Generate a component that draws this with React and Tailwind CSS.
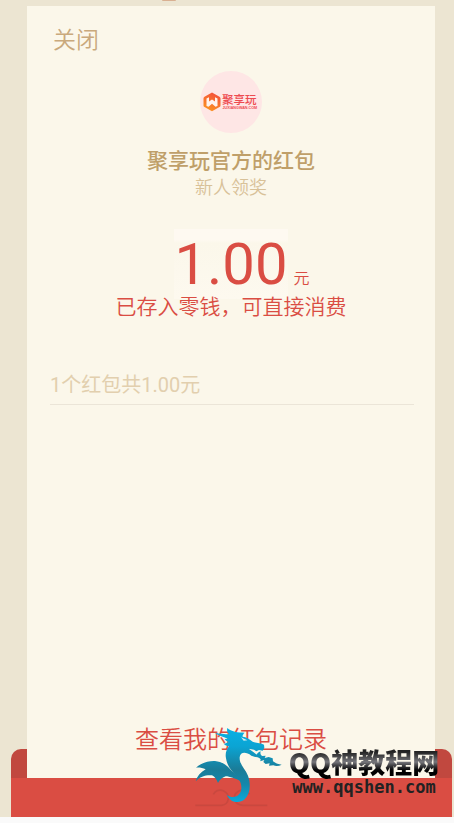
import React from 'react';

const BrandLogo = () => (
    <svg viewBox="0 0 56 20" className="w-14 h-5" aria-hidden="true">
        <defs>
            <linearGradient id="hex" x1="0.7" y1="0" x2="0.3" y2="1">
                <stop offset="0" stopColor="#f4503c" />
                <stop offset="1" stopColor="#fb9420" />
            </linearGradient>
        </defs>
        <path d="M9 0.600 L16.5 4.800 Q17.500 5.400 17.500 6.500 V13.500 Q17.500 14.500 16.500 15 L9 19.300 L1.500 15 Q0.500 14.500 0.500 13.500 V6.500 Q0.500 5.400 1.500 4.800 Z" fill="url(#hex)" />
        <path d="M3.500 6.500 L6 5.300 V9.500 L9 7.600 L12 9.500 V5.300 L14.500 6.500 V14 L12.500 14.800 L9 11.800 L5.500 14.800 L3.500 14 Z" fill="#fff3ee" />
        <text x="19" y="12" fontSize="11.500" fontWeight="500" fill="#ee4a50" fontFamily="'Noto Sans CJK SC', sans-serif">聚享玩</text>
        <text x="19.500" y="17" fontSize="3.700" fontWeight="700" fill="#ee4a50" fontFamily="'Liberation Sans', sans-serif">JUXIANGWAN.COM</text>
    </svg>
);

const Dragon = () => (
    <svg viewBox="0 0 330 324" className="w-[110px] h-[108px]" aria-hidden="true">
        <defs>
            <linearGradient id="scales" x1="0" y1="38" x2="0" y2="265" gradientUnits="userSpaceOnUse">
                <stop offset="0" stopColor="#08b1e6" />
                <stop offset="0.250" stopColor="#0ba4d3" />
                <stop offset="0.550" stopColor="#1a7c98" />
                <stop offset="0.750" stopColor="#1487ab" />
                <stop offset="1" stopColor="#08ade0" />
            </linearGradient>
        </defs>
        <g fill="none" stroke="#c9483f" strokeWidth="5">
            <path d="M46 271 H125 C148 268 153 238 130 227 C117 222 105 228 100 238" />
            <path d="M262 271 H188 C160 268 155 238 178 227 C191 222 203 228 208 238" />
        </g>
        <g fill="url(#scales)">
            <path d="M142 39 C153 50 174 53 194 53 C190 57 187 60 188 65 C199 66 209 72 218 80 C229 85 243 83 252 89 L253 99 L248 107 L237 105 L229 109 L222 104 L206 101 L221 112 L232 121 L229 127 L214 122 C198 110 181 110 179 127 C178 149 195 160 204 182 C213 208 211 237 194 253 C178 267 152 264 140 239 C151 247 164 249 175 240 C188 228 187 207 174 190 C162 174 142 158 138 130 C135 116 139 104 147 94 C140 93 136 91 132 87 L146 81 C140 79 136 76 134 72 L144 71 C128 65 114 61 104 53 C118 56 134 57 148 58 C141 53 140 46 142 39 Z" />
            <path d="M48 158 C63 145 83 137 105 138 C124 140 137 148 148 160 C158 172 174 181 183 199 C166 191 149 184 137 184 C125 188 119 195 114 204 C109 192 105 186 96 181 C80 179 60 184 47 199 C51 184 61 172 77 163 C67 158 57 157 48 158 Z" />
            <path d="M228 125 C229 116 235 112 242 109 C240 116 242 121 247 123 L257 122 L254 129 L266 126 L278 130 L279 139 C286 145 295 148 305 149 C297 153 288 154 280 151 L267 152 L269 145 L257 147 L250 141 L253 135 L240 139 C244 133 243 130 228 125 Z" />
        </g>
        <path d="M183 67 L202 76 L191 77 Z" fill="#d7edf0" />
    </svg>
);

const Watermark = () => (
    <div className="pointer-events-none absolute bottom-0 right-4 flex items-end">
        <Dragon />
        <div className="flex flex-col items-center pb-7 w-[148px] whitespace-nowrap">
            <span className="bg-linear-to-b from-[#222] from-20% via-[#77777c] via-50% to-black to-80% bg-clip-text text-transparent text-[27px] leading-[34px] font-black">
                QQ神教程网
            </span>
            <span className="font-['DejaVu_Sans_Mono','Liberation_Mono',monospace] text-[17px] leading-4 font-bold text-[#222]">
                www.qqshen.com
            </span>
        </div>
    </div>
);

const App = () => {
    return (
        <div className="relative min-h-screen flex flex-col bg-[#fafafa] pb-1.5 font-['Noto_Sans_CJK_SC',sans-serif]">
            <main className="relative flex-1 flex flex-col bg-[#ece5d2] pt-1.5">
                <div className="absolute top-0 left-[162px] w-3.5 h-px rounded-b-full bg-[#d9b092]" />
                {/* back side of the envelope, the card slides out of it */}
                <div className="absolute bottom-0 left-[11px] right-0.5 h-[68px] rounded-t-[10px] bg-[#c1483f]" />

                <section className="relative flex-1 flex flex-col ml-[27px] mr-[19px] bg-[#fbf7ea] pt-4 pb-6">
                    <button type="button" className="self-start ml-[26px] text-[23px] leading-8 font-[350] text-[#c9a97c]">
                        关闭
                    </button>

                    <div className="self-center mt-[17px] w-[62px] h-[62px] rounded-full bg-[#fee6e5] flex items-center justify-center">
                        <BrandLogo />
                    </div>
                    <h1 className="mt-3 text-center text-[21px] leading-7 font-medium text-[#bf9f69]">
                        聚享玩官方的红包
                    </h1>
                    <p className="text-center text-[18px] leading-[26px] font-[350] text-[#d8c198]">新人领奖</p>

                    <div className="mt-[30px] grid grid-cols-[1fr_auto_1fr] items-baseline text-[#da4d43]">
                        <span className="col-start-2 bg-linear-to-b from-[#fef9f1] from-15% via-[#fbf7ea] via-20% to-[#fdf9ef] font-[Roboto,sans-serif] text-[58px] leading-[70px]">
                            1.00
                        </span>
                        <span className="ml-1.5 text-[16px] leading-6 font-[350]">元</span>
                    </div>
                    <p className="-mt-2 text-center text-[21px] leading-7 font-[350] text-[#da4d43]">
                        已存入零钱，可直接消费
                    </p>

                    <div className="mt-[50px] ml-[23px] mr-[21px] pb-[3px] border-b border-[#ebe5d8] font-[Roboto,'Noto_Sans_CJK_SC',sans-serif] text-[20px] leading-8 text-[#e2cfae]">
                        1个红包共1.00元
                    </div>

                    <a href="#records" className="mt-auto self-center text-[24px] leading-8 font-[350] text-[#da4d43]">
                        查看我的红包记录
                    </a>
                </section>

                <div className="relative h-[39px] ml-[11px] mr-0.5 bg-[#da4d43]" />
            </main>
            <Watermark />
        </div>
    );
};

export default App;
